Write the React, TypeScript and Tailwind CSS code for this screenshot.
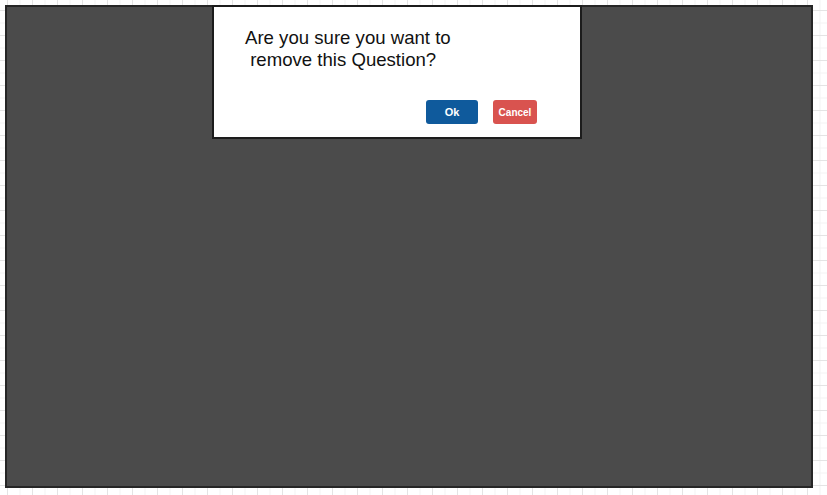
export default function App() {
  return (
    <div className="w-[827px] h-[495px] bg-white bg-[linear-gradient(to_right,#e4e4e4_1px,transparent_1px),linear-gradient(to_bottom,#e4e4e4_1px,transparent_1px),linear-gradient(to_right,#f3f3f3_1px,transparent_1px),linear-gradient(to_bottom,#f3f3f3_1px,transparent_1px)] bg-[size:25px_25px,25px_25px,12.5px_12.5px,12.5px_12.5px] bg-[position:7px_10px,7px_10px,7px_10px,7px_10px] p-[5px] font-['Liberation_Sans',Arial,sans-serif]">
      <div className="relative w-[808px] h-[483px] bg-[#4b4b4b] border-2 border-[#262626]">
        <div className="absolute left-[205px] top-[-2px] w-[370px] h-[134px] bg-white border-2 border-[#1c1c1c] flex flex-col pl-[31px] pr-[43px] pt-[20px]">
          <p className="text-[18.6px] leading-[22px] text-[#111] whitespace-pre">{'Are you sure you want to\n remove this Question?'}</p>
          <div className="flex justify-end gap-[15px] mt-[29px]">
            <button className="w-[52px] h-[24px] rounded-[3px] bg-[#0f5a9c] text-white text-[11px] font-bold">Ok</button>
            <button className="w-[44px] h-[24px] rounded-[3px] bg-[#d9534f] text-white text-[10px] font-bold">Cancel</button>
          </div>
        </div>
      </div>
    </div>
  )
}
